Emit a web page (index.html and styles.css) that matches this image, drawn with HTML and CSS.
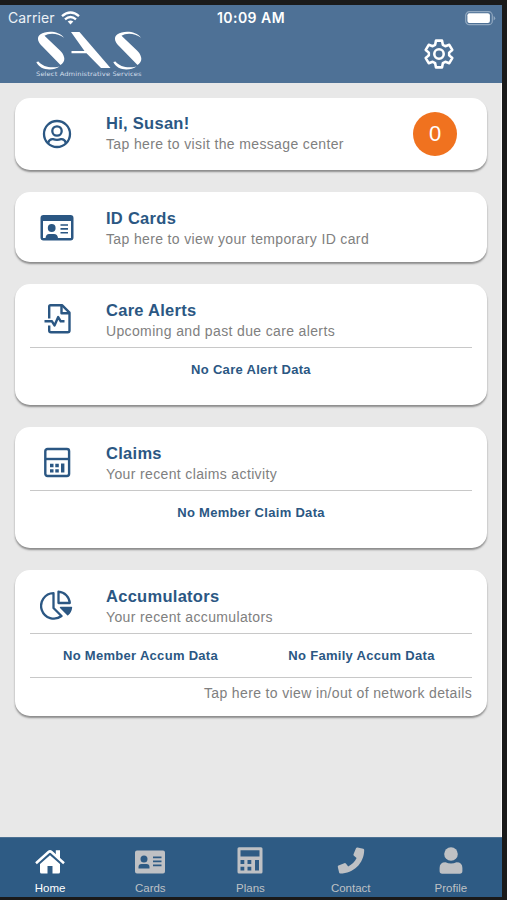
FILE: index.html
```html
<!DOCTYPE html>
<html lang="en">
<head>
<meta charset="utf-8">
<title>SAS Member Home</title>
<link rel="stylesheet" href="styles.css">
</head>
<body>
<div class="phone">
  <header class="header">
    <div class="status">
      <div class="carrier"><span>Carrier</span>
        <svg class="wifi" viewBox="0 0 19 14" fill="none" stroke="#fff" stroke-width="2.4"><path d="M1 5.2Q9.5-2 18 5.2"/><path d="M4 8.4Q9.5 3.8 15 8.4"/><path d="M6.7 10.5Q9.5 8.3 12.3 10.5L9.5 13.5Z" fill="#fff" stroke="none"/></svg>
      </div>
      <div class="time">10:09 AM</div>
      <svg class="battery" viewBox="0 0 31 15"><rect x=".7" y=".7" width="26.6" height="13" rx="3.8" fill="none" stroke="#91a8c0" stroke-width="1.2"/><rect x="2.4" y="2.3" width="22.5" height="9.8" rx="2" fill="#fff"/><path d="M28.6 5v4.5q1.6-.7 1.6-2.2T28.6 5Z" fill="#91a8c0"/></svg>
    </div>
    <div class="brandbar">
      <div class="brand">
        <svg class="logo" viewBox="0 0 106 39" fill="#fff">
          <path d="M28 6.800C23 -.3 10 -.5 4.500 3.300C.8 6 1.500 10 4.500 13.500L24.500 34C27.500 32 29 29.500 28 26C27.500 23.500 26 21.500 24 19.500L8.500 4.800C13 1.600 22 2 28 6.800Z"/>
          <path d="M.3 31C4 39.800 17 40 23.500 35.500C15 37.500 7 36 2.500 30.500Z"/>
          <path d="M35 1H43.500L74.500 37H65L50.500 22.300H35.500V20H48.500Z"/>
          <g transform="translate(77 0)"><path d="M28 6.800C23 -.3 10 -.5 4.500 3.300C.8 6 1.500 10 4.500 13.500L24.500 34C27.500 32 29 29.500 28 26C27.500 23.500 26 21.500 24 19.500L8.500 4.800C13 1.600 22 2 28 6.800Z"/>
          <path d="M.3 31C4 39.800 17 40 23.500 35.500C15 37.500 7 36 2.500 30.500Z"/></g>
        </svg>
        <div class="tagline"><span>Select Administrative Services</span></div>
      </div>
      <svg class="gear" viewBox="0 0 28 28" fill="none" stroke="#fff" stroke-width="2.400" stroke-linejoin="round"><path d="M11.200 1.500H16.800L17.600 5.400L19.900 6.700L23.600 5.400L26.400 10.200L23.500 12.700V15.300L26.400 17.800L23.600 22.600L19.900 21.300L17.600 22.600L16.800 26.500H11.200L10.400 22.600L8.100 21.300L4.400 22.600L1.600 17.800L4.500 15.300V12.700L1.600 10.200L4.400 5.400L8.100 6.700L10.400 5.400Z"/><circle cx="14" cy="14" r="4.400"/></svg>
    </div>
  </header>

  <main class="content">
    <section class="card greeting">
      <div class="head">
        <svg class="icon" viewBox="0 0 34 34" fill="none" stroke="#2b5783" stroke-width="2.300"><circle cx="17" cy="17" r="13"/><circle cx="17" cy="14" r="4.700"/><path d="M8 26Q9.500 21.800 13 22.200Q17 23.400 21 22.200Q24.500 21.800 26 26"/></svg>
        <div class="words"><h2>Hi, Susan!</h2><p>Tap here to visit the message center</p></div>
        <div class="count">0</div>
      </div>
    </section>

    <section class="card idcards">
      <div class="head">
        <svg class="icon" viewBox="0 0 34 34"><path fill="#2b5783" fill-rule="evenodd" d="M3.500 4H30.500Q33.500 4 33.500 7V26.500Q33.500 29.500 30.500 29.500H3.500Q.5 29.500 .5 26.500V7Q.5 4 3.500 4ZM3 10V27H5.500Q6 23 9 23H14Q17.500 23 18 27H31V10Z"/><circle cx="11.700" cy="17" r="3.900" fill="#2b5783"/><path d="M20.500 14H28M20.500 17.900H28M20.500 21.800H28" stroke="#2b5783" stroke-width="1.600"/></svg>
        <div class="words"><h2>ID Cards</h2><p>Tap here to view your temporary ID card</p></div>
      </div>
    </section>

    <section class="card alerts">
      <div class="head">
        <svg class="icon" viewBox="0 0 34 34" fill="none" stroke="#2b5783" stroke-width="2.400" stroke-linejoin="round"><path d="M9.200 16.500V4.500Q9.200 3.200 10.500 3.200H22L29.500 10.700V28.500Q29.500 30.300 27.700 30.300H11Q9.200 30.300 9.200 28.500V23.500"/><path d="M21.500 3.500V11.200H29.200"/><path d="M4.500 19.300H12L14.500 23.500L18.200 15L20.700 19.300H24.500"/></svg>
        <div class="words"><h2>Care Alerts</h2><p>Upcoming and past due care alerts</p></div>
      </div>
      <div class="data"><span>No Care Alert Data</span></div>
    </section>

    <section class="card claims">
      <div class="head">
        <svg class="icon" viewBox="0 0 34 34" fill="none" stroke="#2b5783" stroke-width="2.400"><rect x="5.300" y="4" width="23.800" height="27" rx="2.200"/><path d="M5.300 14H29"/><path d="M10 20.500H13.500M15.300 20.500H18.800M10 25.800H13.500M15.300 25.800H18.800" stroke-width="3.300"/><path d="M22.700 18.500V27.500" stroke-width="3.400"/></svg>
        <div class="words"><h2>Claims</h2><p>Your recent claims activity</p></div>
      </div>
      <div class="data"><span>No Member Claim Data</span></div>
    </section>

    <section class="card accums">
      <div class="head">
        <svg class="icon" viewBox="0 0 34 34" fill="none" stroke="#2b5783" stroke-width="2.300" stroke-linejoin="round"><path d="M13.500 5.200A12.700 12.700 0 1 0 21.500 28L13.500 20Z"/><path d="M18.500 3.700V15H29.800C29.300 8.800 24.700 4.200 18.500 3.700Z"/><path d="M20.500 19.500H31.500Q31 24 27.700 26.800Z" fill="#2b5783" stroke-width="1.400"/></svg>
        <div class="words"><h2>Accumulators</h2><p>Your recent accumulators</p></div>
      </div>
      <div class="data split"><span>No Member Accum Data</span><span>No Family Accum Data</span></div>
      <p class="more">Tap here to view in/out of network details</p>
    </section>
  </main>

  <nav class="tabs">
    <a class="tab active"><svg viewBox="0 0 32 28" fill="currentColor"><path d="M16 8.300L26 17V25Q26 26.500 24.500 26.500H18.500V19H13.500V26.500H7.500Q6 26.500 6 25V17Z"/><path d="M2 16.200L14.500 5Q16 3.700 17.500 5L30 16.200" fill="none" stroke="currentColor" stroke-width="2.500"/><path d="M21.800 3.200H26V13L21.800 9Z"/></svg><span>Home</span></a>
    <a class="tab"><svg viewBox="0 0 32 28"><path fill="currentColor" fill-rule="evenodd" d="M3 3.500H29Q31 3.500 31 5.500V24.500Q31 26.500 29 26.500H3Q1 26.500 1 24.500V5.500Q1 3.500 3 3.500ZM6.500 12A3.500 3.500 0 1 0 13.500 12A3.500 3.500 0 1 0 6.500 12ZM4.500 21.500H15.500V20Q15.500 17 12.500 17H7.500Q4.500 17 4.500 20ZM19 9.500V11.200H27.500V9.500ZM19 13.500V15.200H27.500V13.500ZM19 17.500V19.200H27.500V17.500Z"/></svg><span>Cards</span></a>
    <a class="tab"><svg viewBox="0 0 32 28"><path fill="currentColor" fill-rule="evenodd" d="M5 .3H27Q28.500 .3 28.500 1.800V25Q28.500 26.500 27 26.500H5Q3.500 26.500 3.500 25V1.800Q3.500 .3 5 .3ZM6.500 3.300V9.500H25.500V3.300ZM6.500 13V17H10.300V13ZM13.500 13V17H17.300V13ZM6.500 19.700V23.500H10.300V19.700ZM13.500 19.700V23.500H17.300V19.700ZM21 13V23.500H25V13Z"/></svg><span>Plans</span></a>
    <a class="tab"><svg viewBox="0 0 32 28" fill="currentColor"><path d="M22.500 .5L28.300 1.700Q29.200 2 29.200 3C29 16.500 18.500 26.500 5.300 26.500Q4.300 26.500 4.100 25.500L2.800 20Q2.600 19 3.500 18.600L9.300 16.200Q10.200 15.800 10.900 16.600L13.200 19.400C17 17.500 19.700 14.800 21.600 11L18.900 8.700Q18.200 8 18.500 7.200L21 1.200Q21.500.3 22.500 .5Z"/></svg><span>Contact</span></a>
    <a class="tab"><svg viewBox="0 0 32 28" fill="currentColor"><circle cx="16" cy="7" r="6.800"/><path d="M4.600 24V21Q4.600 15.300 10.500 15.300Q16 17.700 21.500 15.300Q27.400 15.300 27.400 21V24Q27.400 26.800 24.800 26.800H7.200Q4.600 26.800 4.600 24Z"/></svg><span>Profile</span></a>
  </nav>
</div>
</body>
</html>
```
FILE: styles.css
```css
* { box-sizing: border-box; }

body {
  margin: 0;
  background: #1a1a1a;
  font-family: "Liberation Sans", Arial, sans-serif;
}

.phone {
  width: 502px;
  height: 900px;
  padding: 5px 0 3px;
  display: flex;
  flex-direction: column;
}

.header {
  height: 78px;
  background: #4e7196;
  color: #fff;
  flex: none;
}

.status {
  height: 26px;
  display: grid;
  grid-template-columns: 1fr auto 1fr;
  align-items: center;
  padding: 0 6px 0 8px;
  font: 14px/26px Inter, sans-serif;
}

.carrier { display: flex; align-items: center; gap: 6px; color: #edf2f7; letter-spacing: 0.100px; }
.wifi { width: 19px; height: 14px; }
.time { font-weight: 600; letter-spacing: 0.450px; margin-right: 2px; }
.battery { width: 31px; height: 15px; justify-self: end; }

.brandbar {
  display: flex;
  justify-content: space-between;
  padding: 0 48px 0 36px;
}

.brand { width: 106px; }
.logo { display: block; width: 106px; height: 39px; }

.tagline {
  height: 7px;
  font-family: "DejaVu Sans", sans-serif;
  font-size: 6px;
  line-height: 8px;
  white-space: nowrap;
  color: #d3deea;
}

.tagline span { display: inline-block; transform: scaleX(1.12); transform-origin: left; letter-spacing: 0.100px; }
.gear { width: 30px; height: 30px; margin-top: 8px; }

.content {
  flex: 1;
  background: #e8e8e8;
  border-right: 1px solid #f6f6f6;
  padding: 15px 14px 0 15px;
  display: flex;
  flex-direction: column;
  gap: 22px;
}

.card {
  background: #fff;
  border-radius: 15px;
  padding: 0 15px;
  box-shadow: 0 2px 2px #8c8c8c;
}

.greeting { height: 72px; }
.idcards { height: 70px; }
.alerts, .claims { height: 121px; }
.accums { height: 146px; }

.head {
  height: 64px;
  display: flex;
  align-items: center;
  border-bottom: 1px solid #c8c8c8;
}

.greeting .head, .idcards .head { border: 0; height: 100%; }

.icon { width: 34px; height: 34px; margin: 7px 32px 0 10px; flex: none; }
.greeting .icon { margin-top: 0; }
.idcards .icon { margin-top: 1px; }
.words { flex: 1; padding-top: 10px; }
.greeting .words { padding-top: 0; margin-top: -1px; }
.idcards .words { padding-top: 2px; }

h2, p { margin: 0; }

h2 {
  font-size: 16.500px;
  line-height: 21px;
  letter-spacing: 0.280px;
  color: #2b5783;
}

p {
  font-size: 14px;
  line-height: 20px;
  letter-spacing: 0.360px;
  color: #808080;
}

.count {
  width: 44px;
  height: 44px;
  margin-right: 15px;
  border-radius: 50%;
  background: #f0721f;
  color: #fff;
  font-size: 22px;
  line-height: 44px;
  text-align: center;
}

.data {
  height: 43px;
  display: flex;
  justify-content: center;
  align-items: center;
  font-size: 13px;
  font-weight: bold;
  letter-spacing: 0.300px;
  color: #2b5783;
}

.split { height: 44px; border-bottom: 1px solid #c8c8c8; }
.split span { flex: 1; text-align: center; }
.more { line-height: 30px; text-align: right; }

.tabs {
  height: 60px;
  background: #2e5b84;
  border-top: 1px solid #4c7193;
  display: grid;
  grid-template-columns: repeat(5, 1fr);
  padding-right: 1px;
  flex: none;
}

.tab {
  display: flex;
  flex-direction: column;
  align-items: center;
  padding-top: 9px;
  color: #bfc1c4;
}

.tab svg { width: 32px; height: 28px; }
.tab span { font-size: 11.500px; line-height: 14px; margin-top: 6px; }
.tab.active { color: #fff; }
```
